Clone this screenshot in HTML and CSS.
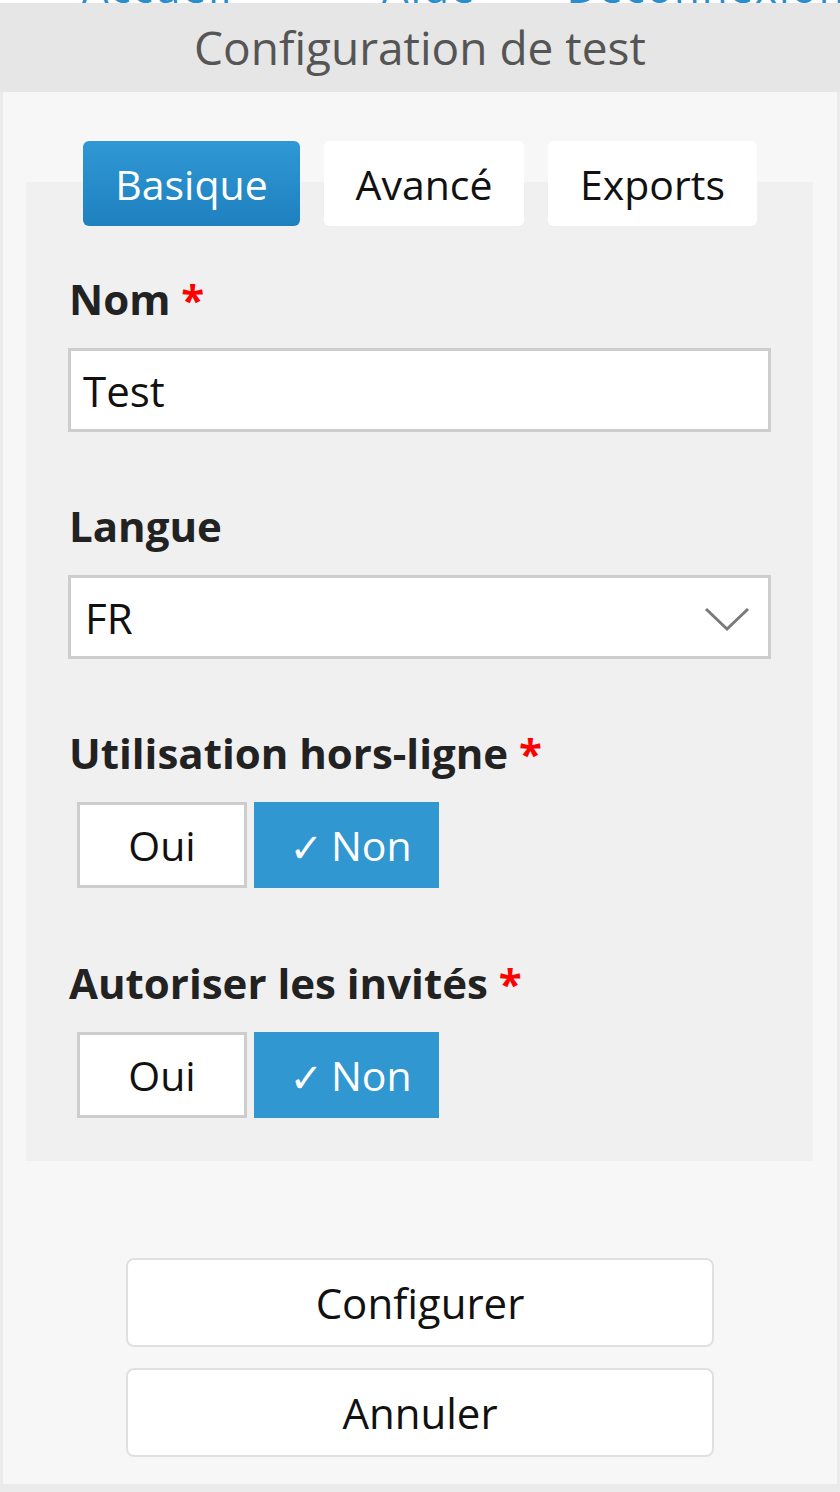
FILE: index.html
```html
<!DOCTYPE html>
<html lang="fr">
<head>
<meta charset="utf-8">
<title>Configuration de test</title>
<link rel="stylesheet" href="styles.css">
</head>
<body>
<nav class="topnav">
  <a class="nav-a">Accueil</a>
  <span class="nav-sep"></span>
  <a class="nav-b">Aide</a>
  <span class="nav-sep"></span>
  <a class="nav-c">Déconnexion</a>
</nav>
<div class="modal">
  <header class="modal-header">Configuration de test</header>
  <div class="modal-body">
    <div class="tabs">
      <button class="tab tab-active">Basique</button>
      <button class="tab">Avancé</button>
      <button class="tab">Exports</button>
    </div>
    <div class="panel">
      <div class="field">
        <label class="label">Nom <span class="req">*</span></label>
        <div class="input">Test</div>
      </div>
      <div class="field">
        <label class="label">Langue</label>
        <div class="input select">
          <span>FR</span>
          <svg class="chev" width="46" height="26" viewBox="0 0 46 26"><path d="M2 3 L23 23 L44 3" fill="none" stroke="#7a7a7a" stroke-width="3"/></svg>
        </div>
      </div>
      <div class="field field-toggle">
        <label class="label">Utilisation hors-ligne <span class="req">*</span></label>
        <div class="toggle">
          <button class="opt opt-oui">Oui</button>
          <button class="opt opt-non opt-on"><span class="check">✓</span> Non</button>
        </div>
      </div>
      <div class="field last">
        <label class="label">Autoriser les invités <span class="req">*</span></label>
        <div class="toggle">
          <button class="opt opt-oui">Oui</button>
          <button class="opt opt-non opt-on"><span class="check">✓</span> Non</button>
        </div>
      </div>
    </div>
    <div class="actions">
      <button class="btn">Configurer</button>
      <button class="btn">Annuler</button>
    </div>
  </div>
</div>
</body>
</html>
```

FILE: styles.css
```css
* { box-sizing: border-box; }
html, body { margin: 0; padding: 0; }
body {
  background: #ebebeb;
  font-family: "Open Sans", "DejaVu Sans", sans-serif;
  color: #111;
  width: 840px;
}
.topnav {
  height: 3px;
  overflow: hidden;
  background: #fff;
  display: flex;
  align-items: flex-start;
}
.topnav a {
  color: #2a8dcc;
  font-size: 42px;
  line-height: 42px;
  margin-top: -34px;
  letter-spacing: 2px;
}
.nav-a { margin-left: 82px; width: 100px; }
.nav-b { margin-left: 200px; width: 150px; }
.nav-c { margin-left: 90px; }
.nav-sep { width: 0; }
.modal-header {
  background: #e6e6e6;
  height: 89px;
  display: flex;
  align-items: center;
  justify-content: center;
  font-size: 46px;
  color: #555;
  padding-bottom: 2px;
}
.modal-body {
  background: #f7f7f7;
  margin: 0 3px 0 3px;
  padding: 49px 0 27px;
}
.tabs {
  display: flex;
  justify-content: center;
  gap: 24px;
  position: relative;
  z-index: 1;
}
.tab {
  font-family: inherit;
  font-size: 41px;
  height: 85px;
  border: none;
  border-radius: 6px;
  background: #fff;
  color: #111;
  padding: 0;
}
.tab:nth-child(1) { width: 217px; }
.tab:nth-child(2) { width: 200px; }
.tab:nth-child(3) { width: 209px; }
.tab-active {
  background: linear-gradient(#2f98d5, #1f80bf);
  color: #fff;
}
.panel {
  background: #f0f0f0;
  margin: -44px 24px 0 23px;
  padding: 88px 42px 43px 43px;
}
.field { margin-bottom: 65px; }
.field-toggle { margin-bottom: 66px; }
.field.last { margin-bottom: 0; }
.label {
  display: block;
  font-size: 42px;
  font-weight: 700;
  line-height: 57px;
  color: #222;
  margin-bottom: 21px;
}
.req { color: #f00; }
.input {
  height: 84px;
  border: 3px solid #cdcdcd;
  background: #fff;
  font-size: 42px;
  display: flex;
  align-items: center;
  padding-left: 12px;
  margin-left: -1px;
  color: #111;
}
.select {
  justify-content: space-between;
  padding-right: 18px;
  padding-left: 14px;
}
.chev { margin-top: 4px; }
.toggle {
  display: flex;
  gap: 7px;
  margin-left: 8px;
}
.label + .toggle { margin-top: 3px; }
.opt {
  font-family: inherit;
  font-size: 41px;
  height: 86px;
  padding: 0;
  color: #111;
  background: #fff;
  border: 3px solid #cdcdcd;
  display: flex;
  align-items: center;
  justify-content: center;
}
.opt-oui { width: 170px; }
.opt-non { width: 185px; padding-left: 8px; }
.opt-on {
  background: #3097d1;
  border-color: #3097d1;
  color: #fff;
}
.check {
  font-family: "DejaVu Sans", sans-serif;
  font-size: 40px;
  margin-right: 8px;
  margin-top: 6px;
}
.actions {
  display: flex;
  flex-direction: column;
  align-items: center;
  gap: 21px;
  margin-top: 97px;
}
.btn {
  font-family: inherit;
  width: 588px;
  height: 89px;
  background: #fff;
  border: 2px solid #e0e0e0;
  border-radius: 8px;
  font-size: 42px;
  color: #111;
  padding: 0;
}
```
